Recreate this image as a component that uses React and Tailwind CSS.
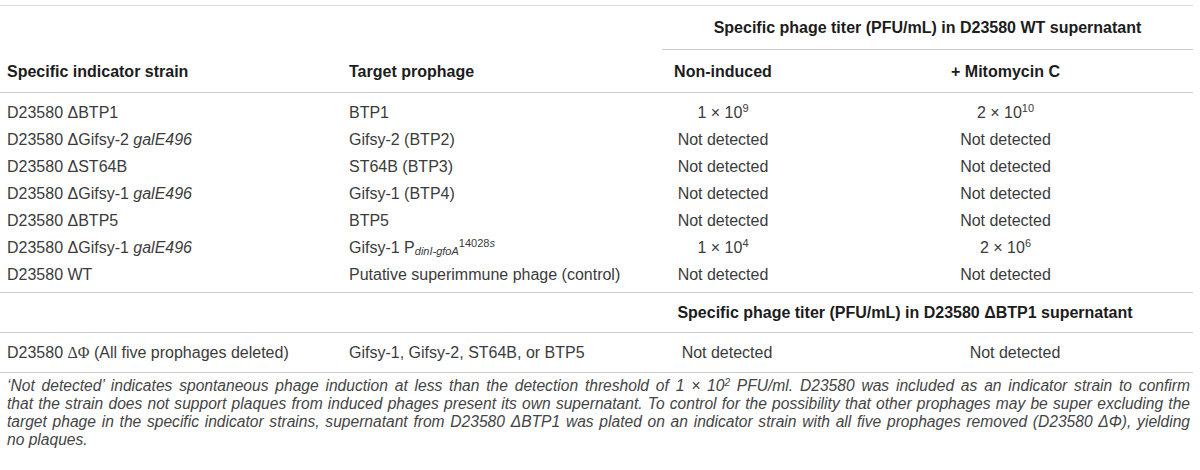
const rows = [
  { strain: <>D23580 ΔBTP1</>, target: 'BTP1', a: <>1 × 10<sup className="text-[11px]">9</sup></>, b: <>2 × 10<sup className="text-[11px]">10</sup></> },
  { strain: <>D23580 ΔGifsy-2 <i>galE496</i></>, target: 'Gifsy-2 (BTP2)', a: 'Not detected', b: 'Not detected' },
  { strain: <>D23580 ΔST64B</>, target: 'ST64B (BTP3)', a: 'Not detected', b: 'Not detected' },
  { strain: <>D23580 ΔGifsy-1 <i>galE496</i></>, target: 'Gifsy-1 (BTP4)', a: 'Not detected', b: 'Not detected' },
  { strain: <>D23580 ΔBTP5</>, target: 'BTP5', a: 'Not detected', b: 'Not detected' },
  {
    strain: <>D23580 ΔGifsy-1 <i>galE496</i></>,
    target: (
      <>
        Gifsy-1 P<sub className="text-[11px] italic">dinI-gfoA</sub>
        <sup className="text-[11px]">
          14028<i>s</i>
        </sup>
      </>
    ),
    a: <>1 × 10<sup className="text-[11px]">4</sup></>,
    b: <>2 × 10<sup className="text-[11px]">6</sup></>,
  },
  { strain: <>D23580 WT</>, target: 'Putative superimmune phage (control)', a: 'Not detected', b: 'Not detected' },
];

const note = [
  '‘Not detected’ indicates spontaneous phage induction at less than the detection threshold of 1 × 10',
  'that the strain does not support plaques from induced phages present its own supernatant. To control for the possibility that other prophages may be super excluding the',
  'target phage in the specific indicator strains, supernatant from D23580 ΔBTP1 was plated on an indicator strain with all five prophages removed (D23580 ΔΦ), yielding',
];

export default function App() {
  return (
    <div className="w-[1200px] h-[470px] bg-white pt-[5px] text-[16px] text-[#3b3b3b] font-['Liberation_Sans',Arial,sans-serif] overflow-hidden">
      <div className="w-[1193px]">
        <div className="h-px bg-[#dcdcdc]" />

        {/* group header */}
        <div className="flex h-[43px] items-center">
          <div className="w-[662px]" />
          <div className="w-[531px] text-center font-bold text-[#1c1c1c]">
            Specific phage titer (PFU/mL) in D23580 WT supernatant
          </div>
        </div>
        <div className="ml-[662px] h-px bg-[#cccccc]" />

        {/* column headers */}
        <div className="flex h-[42px] items-center pt-[1px] font-bold text-[#1c1c1c]">
          <div className="w-[349px] pl-[7px]">Specific indicator strain</div>
          <div className="w-[313px]">Target prophage</div>
          <div className="w-[122px] text-center">Non-induced</div>
          <div className="w-[409px] pl-[34px] text-center">+ Mitomycin C</div>
        </div>
        <div className="h-px bg-[#cccccc]" />

        <div className="pt-[6px] pb-[4px]">
          {rows.map((r, i) => (
            <div key={i} className="flex h-[27px] items-center whitespace-nowrap">
              <div className="w-[349px] pl-[7px]">{r.strain}</div>
              <div className="w-[313px]">{r.target}</div>
              <div className="w-[122px] text-center">{r.a}</div>
              <div className="w-[409px] pl-[34px] text-center">{r.b}</div>
            </div>
          ))}
        </div>
        <div className="h-px bg-[#cccccc]" />

        {/* second section */}
        <div className="flex h-[39px] items-center">
          <div className="w-[662px]" />
          <div className="w-[531px] pr-[45px] text-center font-bold text-[#1c1c1c]">
            Specific phage titer (PFU/mL) in D23580 ΔBTP1 supernatant
          </div>
        </div>
        <div className="h-px bg-[#cccccc]" />
        <div className="flex h-[39px] items-center whitespace-nowrap">
          <div className="w-[349px] pl-[7px]">
            D23580 <span className="font-['Liberation_Serif',serif]">ΔΦ</span> (All five prophages deleted)
          </div>
          <div className="w-[313px]">Gifsy-1, Gifsy-2, ST64B, or BTP5</div>
          <div className="w-[130px] text-center">Not detected</div>
          <div className="w-[401px] pl-[45px] text-center">Not detected</div>
        </div>
        <div className="h-px bg-[#cccccc]" />
      </div>

      {/* footnote */}
      <div className="w-[1190px] pl-[7px] pt-[4px] text-[15.6px] leading-[18px] italic text-[#444]">
        <div className="whitespace-nowrap text-justify [text-align-last:justify]">
          {note[0]}
          <sup className="text-[10px]">2</sup> PFU/ml. D23580 was included as an indicator strain to confirm
        </div>
        <div className="whitespace-nowrap text-justify [text-align-last:justify]">{note[1]}</div>
        <div className="whitespace-nowrap text-justify [text-align-last:justify]">{note[2]}</div>
        <div>no plaques.</div>
      </div>
    </div>
  );
}
